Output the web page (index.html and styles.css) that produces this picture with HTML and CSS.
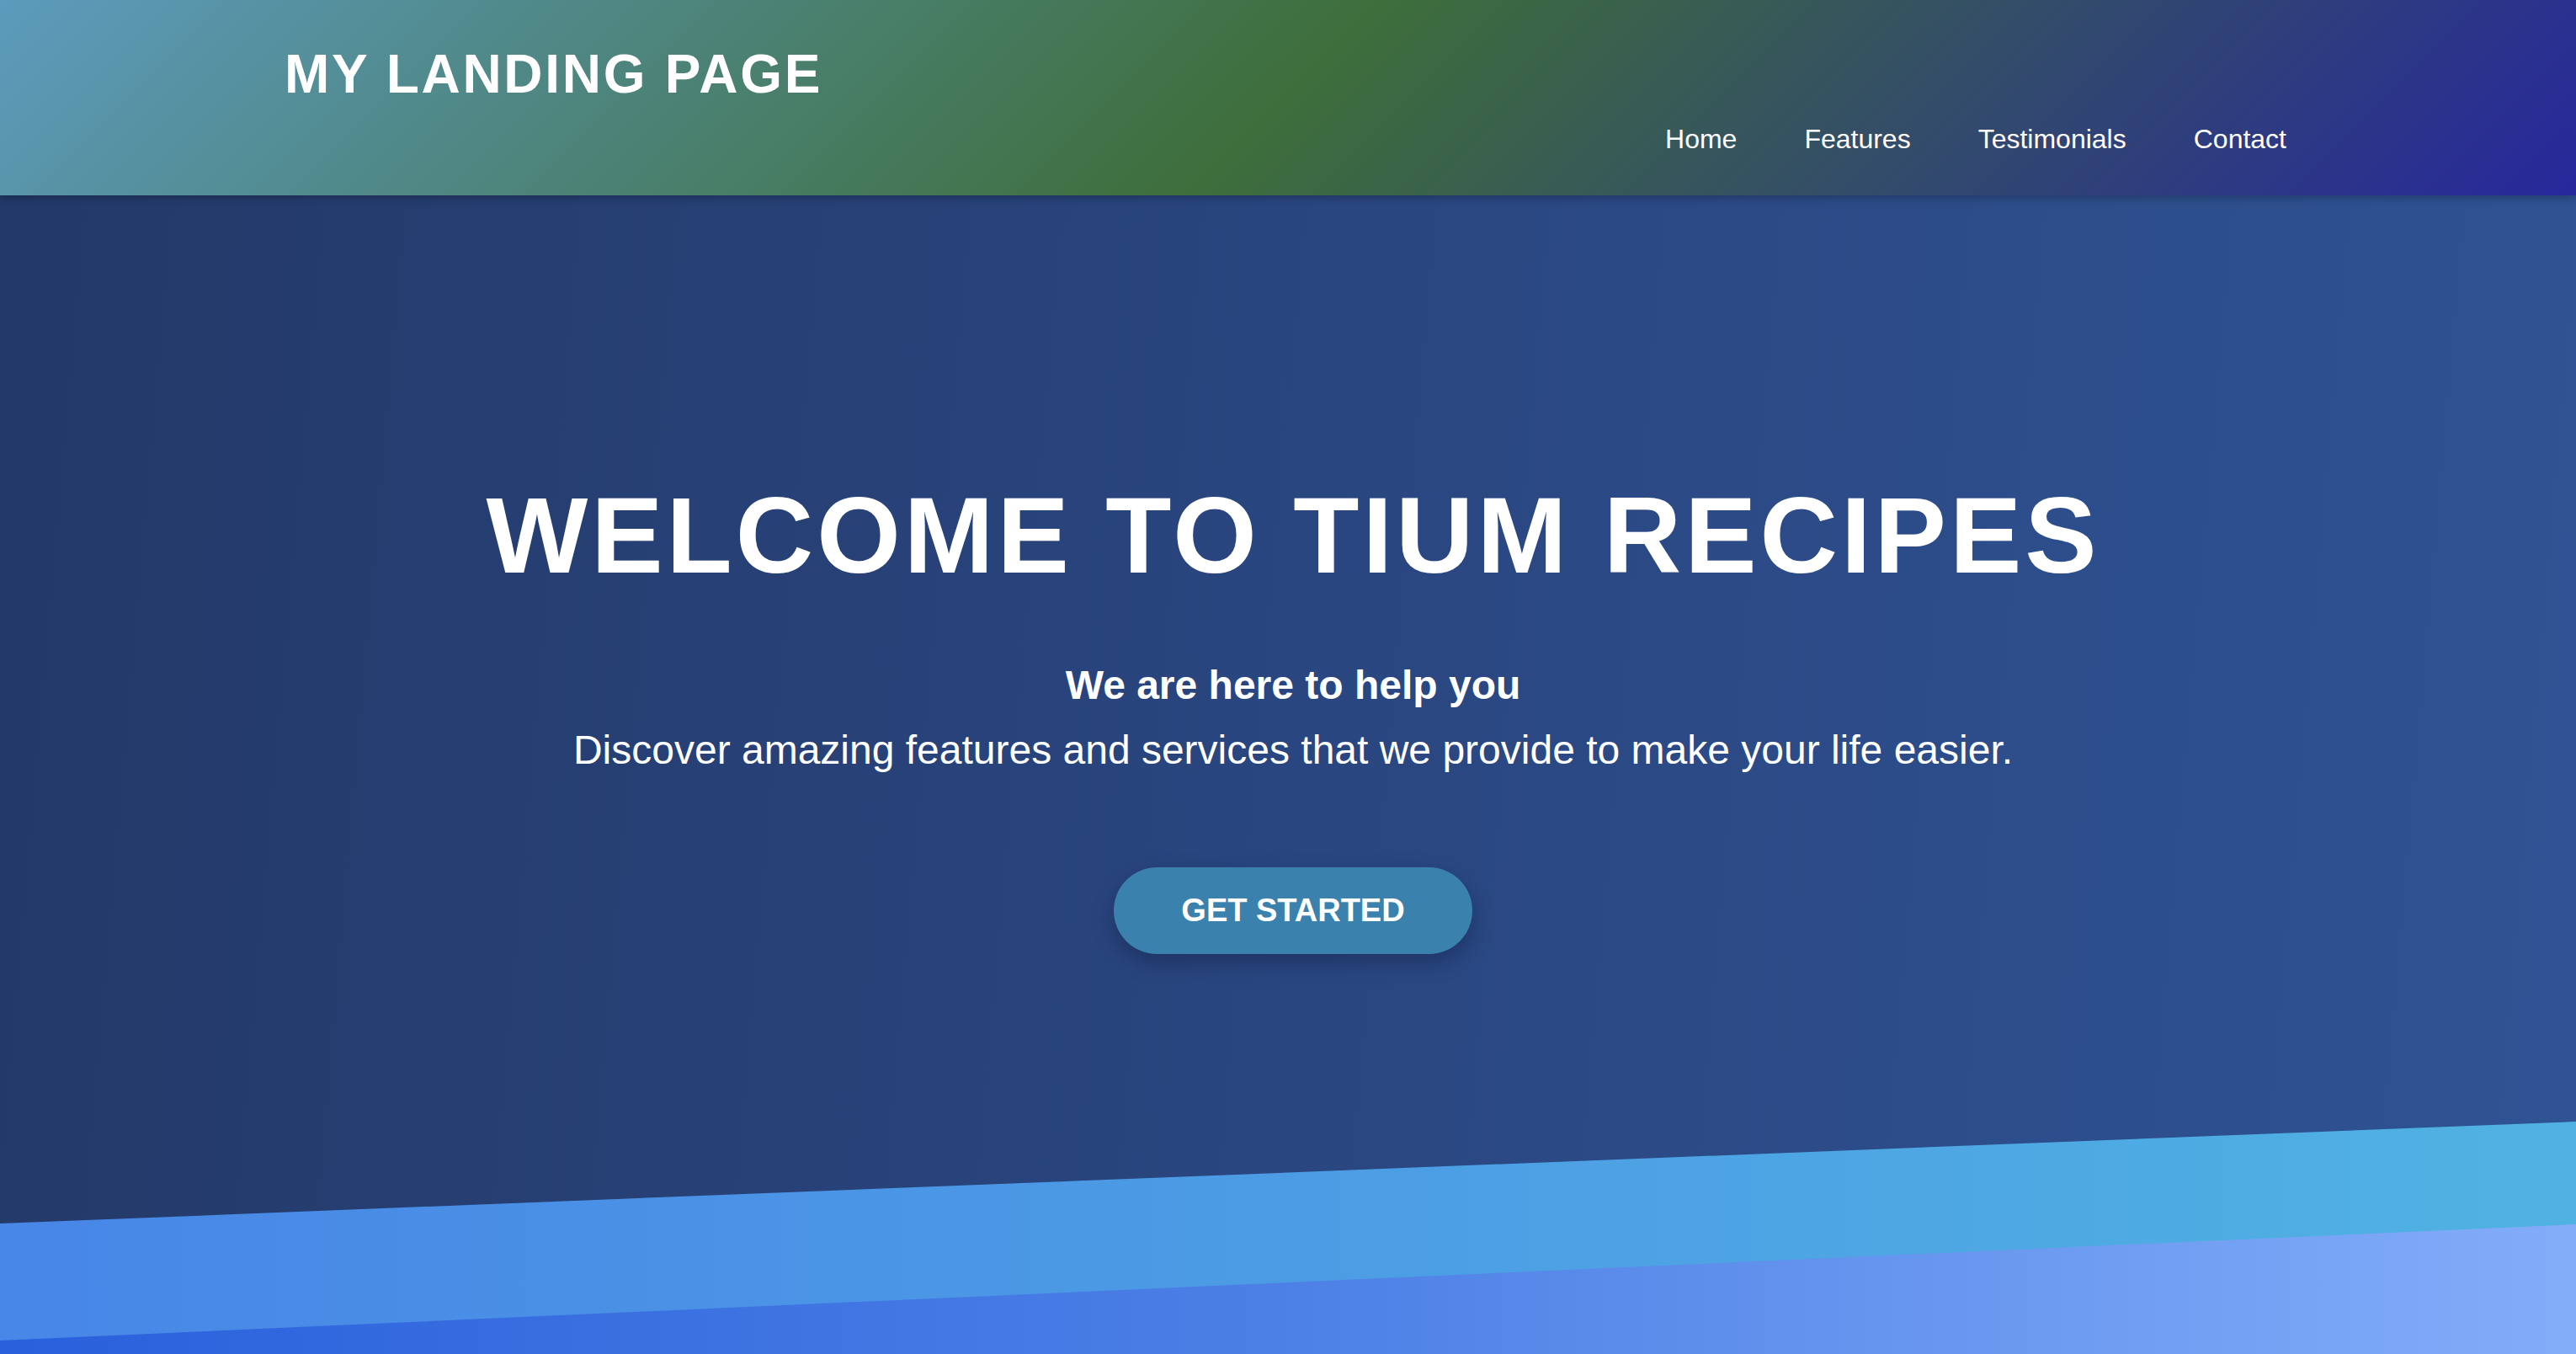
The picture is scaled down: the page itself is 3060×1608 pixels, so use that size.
FILE: index.html
```html
<!DOCTYPE html>
<html lang="en">
<head>
<meta charset="utf-8">
<title>My Landing Page</title>
<link rel="stylesheet" href="styles.css">
</head>
<body>
<header class="site-header">
  <div class="brand">MY LANDING PAGE</div>
  <nav class="nav">
    <a href="#home">Home</a>
    <a href="#features">Features</a>
    <a href="#testimonials">Testimonials</a>
    <a href="#contact">Contact</a>
  </nav>
</header>
<main class="hero">
  <div class="hero-content">
    <h1 class="hero-title">WELCOME TO TIUM RECIPES</h1>
    <p class="hero-text"><strong>We are here to help you</strong><br>Discover amazing features and services that we provide to make your life easier.</p>
    <a class="cta" href="#start">GET STARTED</a>
  </div>
  <svg class="waves" viewBox="0 0 3060 276" preserveAspectRatio="none" aria-hidden="true">
    <defs>
      <linearGradient id="g1" x1="0" y1="0" x2="1" y2="0">
        <stop offset="0" stop-color="#4886e7"/>
        <stop offset="1" stop-color="#50b2e2"/>
      </linearGradient>
      <linearGradient id="g2" x1="0" y1="0" x2="1" y2="0">
        <stop offset="0" stop-color="#2960dc"/>
        <stop offset="0.5" stop-color="#4d80e6"/>
        <stop offset="1" stop-color="#83adf9"/>
      </linearGradient>
    </defs>
    <polygon points="0,121 3060,0 3060,276 0,276" fill="url(#g1)"/>
    <polygon points="0,260 3060,122 3060,276 0,276" fill="url(#g2)"/>
  </svg>
</main>
</body>
</html>
```
FILE: styles.css
```css
html, body {
  margin: 0;
  padding: 0;
}
body {
  font-family: "Liberation Sans", Arial, Helvetica, sans-serif;
  color: #fff;
  width: 3060px;
  height: 1608px;
  overflow: hidden;
  display: flex;
  flex-direction: column;
}
.site-header {
  position: relative;
  z-index: 2;
  box-sizing: border-box;
  height: 232px;
  flex: 0 0 232px;
  display: flex;
  justify-content: space-between;
  align-items: flex-start;
  padding: 51px 344px 0 338px;
  background: linear-gradient(135deg, #5d9bbd 0%, #3e6e3b 50%, #27279c 100%);
  box-shadow: 0 3px 10px rgba(0, 0, 0, 0.25);
}
.brand {
  font-size: 64px;
  font-weight: 700;
  letter-spacing: 2.7px;
  line-height: normal;
}
.nav {
  display: flex;
  gap: 80px;
  margin-top: 96px;
}
.nav a {
  color: #fff;
  text-decoration: none;
  font-size: 32px;
  line-height: normal;
}
.hero {
  position: relative;
  flex: 1;
  background: linear-gradient(95deg, #233968 0%, #2a4680 50%, #2f5394 100%);
  overflow: hidden;
}
.hero-content {
  display: flex;
  flex-direction: column;
  align-items: center;
  text-align: center;
  padding: 330px 0 0 12px;
}
.hero-title {
  margin: 0;
  font-size: 128px;
  font-weight: 700;
  letter-spacing: 4px;
  line-height: normal;
}
.hero-text {
  margin: 67px 0 0;
  font-size: 48px;
  line-height: 1.6;
}
.hero-text strong {
  font-weight: 700;
}
.cta {
  margin-top: 100px;
  display: inline-block;
  padding: 30px 80px;
  border-radius: 60px;
  background: #3a82ad;
  color: #fff;
  text-decoration: none;
  font-size: 38px;
  font-weight: 700;
  line-height: normal;
  box-shadow: 0 10px 24px rgba(10, 20, 50, 0.35);
}
.waves {
  position: absolute;
  left: 0;
  bottom: 0;
  width: 3060px;
  height: 276px;
  display: block;
}
```
